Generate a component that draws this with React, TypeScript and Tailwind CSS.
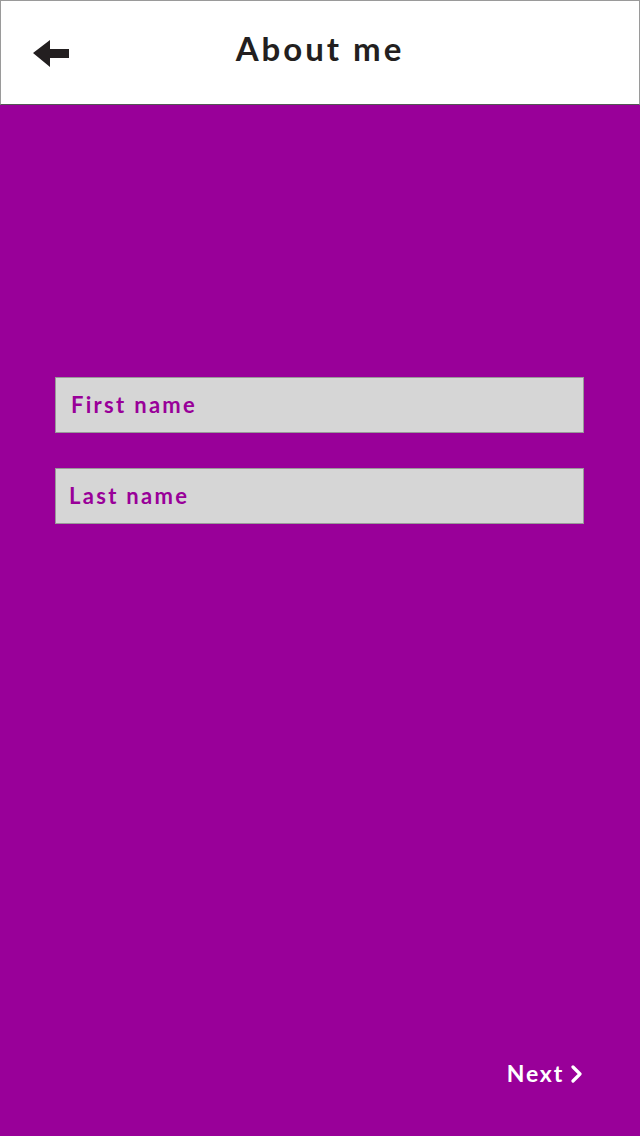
import React from "react";

export default function App() {
  return (
    <div
      className="w-[640px] h-[1136px] bg-[#990099] flex flex-col"
      style={{ fontFamily: "Lato, 'Open Sans', sans-serif" }}
    >
      <header className="h-[105px] bg-white border border-[#9a9a9a] border-b-[#555555] flex items-center relative shrink-0">
        <div className="absolute left-[31px] top-[38px]">
          <svg width="38" height="28" viewBox="0 0 38 28">
            <polygon points="1,14 18,1 18,10 37,10 37,19 18,19 18,28" fill="#231f20" />
          </svg>
        </div>
        <h1 className="w-full text-center text-[33px] font-bold text-[#231f20] tracking-[3px] leading-none mt-[-8px]">
          About me
        </h1>
      </header>
      <main className="flex-1 flex flex-col">
        <div className="mt-[272px] ml-[55px] mr-[56px] flex flex-col gap-[35px]">
          <div className="h-[56px] bg-[#d6d6d6] border border-[#999999] flex items-center px-[15px]">
            <span className="text-[22px] font-bold text-[#990099] tracking-[2.3px] leading-none">
              First name
            </span>
          </div>
          <div className="h-[56px] bg-[#d6d6d6] border border-[#999999] flex items-center px-[13px]">
            <span className="text-[22px] font-bold text-[#990099] tracking-[2.3px] leading-none">
              Last name
            </span>
          </div>
        </div>
        <div className="flex-1" />
        <div className="flex justify-end items-center pr-[57px] pb-[51px] gap-[7px]">
          <span className="text-[23px] font-bold text-white tracking-[1.8px] leading-none">Next</span>
          <svg width="12" height="18" viewBox="0 0 12 18">
            <polyline points="2,2 9,9 2,16" fill="none" stroke="#ffffff" strokeWidth="3.2" strokeLinecap="round" strokeLinejoin="round" />
          </svg>
        </div>
      </main>
    </div>
  );
}
